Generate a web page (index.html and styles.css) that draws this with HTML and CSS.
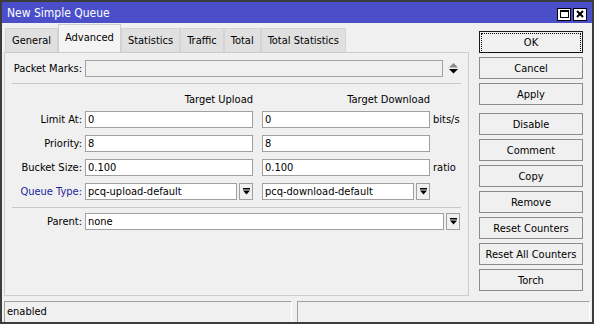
FILE: index.html
```html
<!DOCTYPE html>
<html lang="en">
<head>
    <meta charset="UTF-8">
    <title>New Simple Queue</title>
    <link rel="stylesheet" href="styles.css">
</head>
<body>
    <div class="window">
        <div class="titlebar">
            <span class="title">New Simple Queue</span>
            <div class="title-buttons">
                <span class="tbtn">
                    <svg width="9" height="8" viewBox="0 0 9 8"><rect x="0.5" y="0.5" width="8" height="7" fill="none" stroke="#000"/><rect x="0" y="0" width="9" height="2" fill="#000"/></svg>
                </span>
                <span class="tbtn">
                    <svg width="8" height="8" viewBox="0 0 8 8"><path d="M1 1 L7 7 M7 1 L1 7" stroke="#000" stroke-width="2"/></svg>
                </span>
            </div>
        </div>

        <div class="main">
            <div class="left">
                <div class="tabs">
                    <div class="tab">General</div>
                    <div class="tab active">Advanced</div>
                    <div class="tab">Statistics</div>
                    <div class="tab">Traffic</div>
                    <div class="tab">Total</div>
                    <div class="tab">Total Statistics</div>
                </div>

                <div class="panel">
                    <div class="row first">
                        <span class="label">Packet Marks:</span>
                        <div class="field disabled long"></div>
                        <span class="spin">
                            <svg width="9" height="11" viewBox="0 0 9 11"><path d="M4.5 0 L9 4.5 L0 4.5 Z" fill="#8a8a8a"/><path d="M0 6 L9 6 L4.5 10.5 Z" fill="#000"/></svg>
                        </span>
                    </div>

                    <div class="sep"></div>

                    <div class="row heads">
                        <span class="label"></span>
                        <span class="col-head">Target Upload</span>
                        <span class="col-head">Target Download</span>
                    </div>

                    <div class="row">
                        <span class="label">Limit At:</span>
                        <div class="field col">0</div>
                        <div class="field col">0</div>
                        <span class="unit">bits/s</span>
                    </div>
                    <div class="row">
                        <span class="label">Priority:</span>
                        <div class="field col">8</div>
                        <div class="field col">8</div>
                    </div>
                    <div class="row">
                        <span class="label">Bucket Size:</span>
                        <div class="field col">0.100</div>
                        <div class="field col">0.100</div>
                        <span class="unit">ratio</span>
                    </div>
                    <div class="row">
                        <span class="label link">Queue Type:</span>
                        <div class="combo col">
                            <div class="field">pcq-upload-default</div>
                            <span class="drop"><svg width="7" height="7" viewBox="0 0 7 7"><rect x="0" y="0" width="7" height="1.5" fill="#000"/><path d="M0 2.5 L7 2.5 L3.5 6.5 Z" fill="#000"/></svg></span>
                        </div>
                        <div class="combo col">
                            <div class="field">pcq-download-default</div>
                            <span class="drop"><svg width="7" height="7" viewBox="0 0 7 7"><rect x="0" y="0" width="7" height="1.5" fill="#000"/><path d="M0 2.5 L7 2.5 L3.5 6.5 Z" fill="#000"/></svg></span>
                        </div>
                    </div>

                    <div class="sep second"></div>

                    <div class="row parent">
                        <span class="label">Parent:</span>
                        <div class="combo long-combo">
                            <div class="field">none</div>
                            <span class="drop"><svg width="7" height="7" viewBox="0 0 7 7"><rect x="0" y="0" width="7" height="1.5" fill="#000"/><path d="M0 2.5 L7 2.5 L3.5 6.5 Z" fill="#000"/></svg></span>
                        </div>
                    </div>
                </div>
            </div>

            <div class="buttons">
                <button class="btn default"><span>OK</span></button>
                <button class="btn">Cancel</button>
                <button class="btn">Apply</button>
                <button class="btn spaced">Disable</button>
                <button class="btn">Comment</button>
                <button class="btn">Copy</button>
                <button class="btn">Remove</button>
                <button class="btn">Reset Counters</button>
                <button class="btn">Reset All Counters</button>
                <button class="btn">Torch</button>
            </div>
        </div>

        <div class="statusbar">
            <div class="status first-status">enabled</div>
            <div class="status"></div>
        </div>
    </div>
</body>
</html>
```

FILE: styles.css
```css
/* General */
body {
    margin: 0;
    font-family: "DejaVu Sans Condensed", "DejaVu Sans", sans-serif;
    font-stretch: condensed;
    font-size: 11px;
    color: #000;
    background: #f0f0f0;
}

.window {
    width: 594px;
    height: 324px;
    box-sizing: border-box;
    border: 2px solid #3c3c3c;
    background: #f0f0f0;
    display: flex;
    flex-direction: column;
}

/* Title bar */
.titlebar {
    height: 21px;
    background: #4a4fc9;
    display: flex;
    align-items: center;
    justify-content: space-between;
    padding: 0 5px 0 5px;
    flex-shrink: 0;
}

.title {
    color: #fff;
    font-size: 12px;
}

.title-buttons {
    display: flex;
    gap: 2px;
    margin-top: 3px;
}

.tbtn {
    width: 12px;
    height: 11px;
    background: #fff;
    border: 1px solid #000;
    display: flex;
    align-items: center;
    justify-content: center;
}

/* Main area */
.main {
    flex: 1;
    display: flex;
}

.left {
    width: 465px;
    margin-left: 2px;
    display: flex;
    flex-direction: column;
}

.tabs {
    display: flex;
    align-items: flex-end;
    height: 27px;
    margin-top: 2px;
    padding-left: 1px;
}

.tab {
    height: 23px;
    line-height: 24px;
    padding: 0 6px;
    background: #e0e0e0;
    border: 1px solid #d4d4d4;
    border-bottom: none;
}

.tab.active {
    height: 27px;
    line-height: 25px;
    background: #f4f4f4;
    border-color: #cfcfcf;
}

.panel {
    height: 244px;
    box-sizing: border-box;
    border: 1px solid #cdcdcd;
    background: #f0f0f0;
    padding-top: 7px;
}

/* Form rows */
.row {
    display: flex;
    align-items: center;
    height: 17px;
    margin-top: 7px;
}

.row.first {
    margin-top: 0;
}

.row.heads {
    height: 14px;
    margin-top: 8px;
}

.row.heads + .row {
    margin-top: 5px;
}

.row.parent {
    margin-top: 5px;
}

.label {
    width: 77px;
    text-align: right;
    margin-right: 3px;
    white-space: nowrap;
}

.label.link {
    color: #1e1e9e;
}

.field {
    height: 17px;
    line-height: 15px;
    box-sizing: border-box;
    border: 1px solid #a0a0a0;
    background: #fff;
    padding: 0 2px;
    white-space: nowrap;
    overflow: hidden;
}

.field.disabled {
    background: #f0f0f0;
}

.field.long {
    width: 358px;
}

.col {
    width: 168px;
    margin-right: 9px;
}

.col + .col {
    margin-right: 3px;
}

.col-head {
    width: 168px;
    margin-right: 9px;
    text-align: right;
}

.spin {
    width: 14px;
    margin-left: 3px;
    display: flex;
    justify-content: center;
}

.combo {
    display: flex;
    gap: 2px;
}

.combo .field {
    flex: 1;
}

.long-combo {
    width: 375px;
}

.drop {
    width: 14px;
    height: 17px;
    box-sizing: border-box;
    border: 1px solid #a0a0a0;
    background: #f0f0f0;
    display: flex;
    align-items: center;
    justify-content: center;
}

.sep {
    height: 1px;
    background: #c8c8c8;
    margin: 6px 7px 0 7px;
}

.sep.second {
    margin-top: 7px;
}

/* Buttons column */
.buttons {
    width: 104px;
    margin-left: 10px;
    padding-top: 8px;
    display: flex;
    flex-direction: column;
    gap: 4px;
}

.btn {
    height: 22px;
    font: inherit;
    color: #000;
    background: #f0f0f0;
    border: 1px solid #8c8c8c;
    padding: 0;
}

.btn.spaced {
    margin-top: 4px;
}

.btn.default {
    border-color: #1a1a1a;
    padding: 1px;
}

.btn.default span {
    display: block;
    height: 18px;
    line-height: 18px;
    border: 1px dotted #000;
}

/* Status bar */
.statusbar {
    height: 21px;
    display: flex;
    gap: 5px;
    padding: 1px 2px 0 2px;
    flex-shrink: 0;
}

.status {
    flex: 1;
    border-top: 1px solid #a0a0a0;
    border-left: 1px solid #a0a0a0;
    border-right: 1px solid #fff;
    padding: 3px 2px 0 2px;
}

.first-status {
    flex: 0 0 282px;
}
```
